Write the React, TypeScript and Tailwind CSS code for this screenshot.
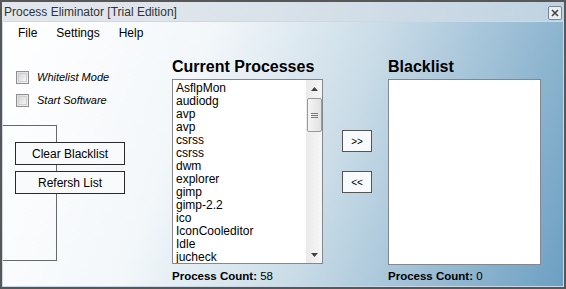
const processes = [
  "AsflpMon",
  "audiodg",
  "avp",
  "avp",
  "csrss",
  "csrss",
  "dwm",
  "explorer",
  "gimp",
  "gimp-2.2",
  "ico",
  "IconCooleditor",
  "Idle",
  "jucheck",
];

function CheckBox({ label }: { label: string }) {
  return (
    <div className="flex items-center h-[13px]">
      <div className="w-[13px] h-[13px] border border-[#8f8f8f] bg-[linear-gradient(135deg,#dcdcdc,#f4f4f4)] p-[1px]">
        <div className="w-full h-full border border-[#cfcfcf] bg-[linear-gradient(135deg,#d6d6d6,#f6f6f6)]" />
      </div>
      <span className="ml-[8px] text-[11px] italic text-black leading-none">{label}</span>
    </div>
  );
}

function FlatButton({ label, className }: { label: string; className: string }) {
  return (
    <div
      className={
        "flex items-center justify-center border bg-[#f8fafc] text-black " +
        className
      }
    >
      {label}
    </div>
  );
}

export default function App() {
  return (
    <div className="w-[566px] h-[289px] flex flex-col border-2 border-[#575757] bg-[#575757] font-['Liberation_Sans',Arial,sans-serif] overflow-hidden">
      {/* Title bar */}
      <div className="h-[19px] shrink-0 flex items-center justify-between pl-[2px] pr-[2px] bg-[linear-gradient(to_right,#e3e7ec,#dbe3ea_45%,#bfd2e1)]">
        <span className="text-[12px] text-[#333] leading-none">Process Eliminator [Trial Edition]</span>
        <div className="w-[14px] h-[14px] mt-[2px] rounded-[2px] border border-[#7d8590] bg-[#e9eef3] flex items-center justify-center">
          <svg width="8" height="8" viewBox="0 0 8 8">
            <path d="M1 1 L7 7 M7 1 L1 7" stroke="#444" strokeWidth="1.6" />
          </svg>
        </div>
      </div>

      {/* Client */}
      <div className="flex-1 flex flex-col border border-[#cbd8e5] bg-[linear-gradient(110deg,#ffffff_0%,#f3f7fa_32%,#cadce7_58%,#6c9fc2_100%)]">
        {/* Menu */}
        <div className="h-[21px] shrink-0 flex items-center text-[12px] text-black">
          <span className="ml-[15px]">File</span>
          <span className="ml-[19px]">Settings</span>
          <span className="ml-[19px]">Help</span>
        </div>

        <div className="flex-1 flex">
          {/* Left column */}
          <div className="w-[169px] flex flex-col">
            <div className="flex flex-col gap-[10px] pt-[28px] pl-[13px]">
              <CheckBox label="Whitelist Mode" />
              <CheckBox label="Start Software" />
            </div>
            <div className="mt-[18px] w-[54px] h-[136px] border-t border-r border-b border-[#686868] pt-[16px] pl-[12px] flex flex-col gap-[6px]">
              <FlatButton label="Clear Blacklist" className="w-[110px] h-[23px] shrink-0 text-[12px] border-[#2a2a2a]" />
              <FlatButton label="Refersh List" className="w-[110px] h-[23px] shrink-0 text-[12px] border-[#2a2a2a]" />
            </div>
          </div>

          {/* Current processes */}
          <div className="w-[151px] flex flex-col">
            <div className="mt-[15px] h-[18px] text-[16px] font-bold leading-[18px] text-black whitespace-nowrap">
              Current Processes
            </div>
            <div className="mt-[3px] h-[185px] shrink-0 flex border border-[#828790] bg-white overflow-hidden">
              <div className="flex-1 pt-[1px] pl-[3px] overflow-hidden">
                {processes.map((p, i) => (
                  <div key={i} className="h-[13px] text-[12px] leading-[14px] text-black whitespace-nowrap">
                    {p}
                  </div>
                ))}
              </div>
              <div className="w-[16px] flex flex-col items-center bg-[linear-gradient(to_right,#eaeaea,#f6f6f6)]">
                <div className="h-[18px] flex items-center justify-center">
                  <svg width="7" height="4" viewBox="0 0 7 4">
                    <path d="M0 4 L3.5 0 L7 4 Z" fill="#404040" />
                  </svg>
                </div>
                <div className="w-[15px] h-[34px] rounded-[2px] border border-[#9a9a9a] bg-[linear-gradient(to_right,#f4f4f4,#e2e2e2)] flex flex-col items-center justify-center gap-[1px]">
                  <div className="w-[7px] h-[1px] bg-[#7a7a7a]" />
                  <div className="w-[7px] h-[1px] bg-[#7a7a7a]" />
                  <div className="w-[7px] h-[1px] bg-[#7a7a7a]" />
                </div>
                <div className="flex-1" />
                <div className="h-[17px] flex items-center justify-center">
                  <svg width="7" height="4" viewBox="0 0 7 4">
                    <path d="M0 0 L3.5 4 L7 0 Z" fill="#404040" />
                  </svg>
                </div>
              </div>
            </div>
            <p className="mt-[5px] h-[15px] text-[11.5px] text-black leading-[15px] whitespace-nowrap">
              <b>Process Count:</b> 58
            </p>
          </div>

          {/* Arrows */}
          <div className="ml-[19px] w-[30px] flex flex-col pt-[87px] gap-[19px]">
            <FlatButton label="&gt;&gt;" className="h-[22px] text-[10px] border-[#555]" />
            <FlatButton label="&lt;&lt;" className="h-[22px] text-[10px] border-[#555]" />
          </div>

          {/* Blacklist */}
          <div className="ml-[16px] w-[153px] flex flex-col">
            <div className="mt-[15px] h-[18px] text-[16px] font-bold leading-[18px] text-black">Blacklist</div>
            <div className="mt-[3px] h-[186px] shrink-0 border border-[#828790] bg-white" />
            <p className="mt-[4px] h-[15px] text-[11.5px] text-black leading-[15px] whitespace-nowrap">
              <b>Process Count:</b> 0
            </p>
          </div>
        </div>
      </div>
    </div>
  );
}
